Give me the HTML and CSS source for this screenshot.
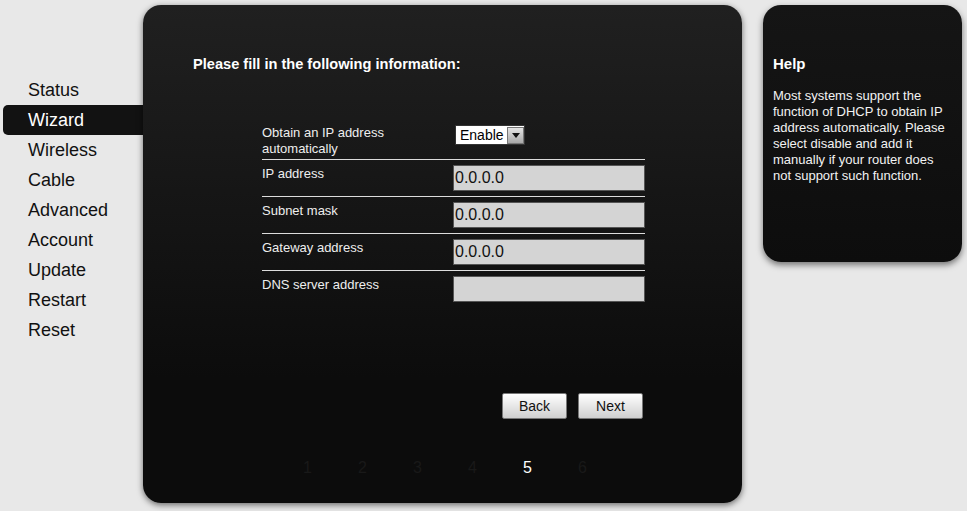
FILE: index.html
```html
<html>

<head>
    <title>Wizard</title>
    <link rel="stylesheet" href="styles.css">
</head>

<body>
    <div id="page">
        <nav id="menu">
            <div class="item">Status</div>
            <div class="item active">Wizard</div>
            <div class="item">Wireless</div>
            <div class="item">Cable</div>
            <div class="item">Advanced</div>
            <div class="item">Account</div>
            <div class="item">Update</div>
            <div class="item">Restart</div>
            <div class="item">Reset</div>
        </nav>

        <main id="panel">
            <h1 class="title">Please fill in the following information:</h1>

            <div id="form">
                <div class="row first">
                    <div class="label">Obtain an IP address automatically</div>
                    <div class="select">
                        <span class="select-value">Enable</span>
                        <span class="select-arrow">
                            <svg width="8" height="5" viewBox="0 0 8 5"><path d="M0 0h8L4 5z" fill="#111"/></svg>
                        </span>
                    </div>
                </div>
                <div class="row">
                    <div class="label">IP address</div>
                    <input class="field" type="text" value="0.0.0.0" readonly>
                </div>
                <div class="row">
                    <div class="label">Subnet mask</div>
                    <input class="field" type="text" value="0.0.0.0" readonly>
                </div>
                <div class="row">
                    <div class="label">Gateway address</div>
                    <input class="field" type="text" value="0.0.0.0" readonly>
                </div>
                <div class="row last">
                    <div class="label">DNS server address</div>
                    <input class="field" type="text" value="" readonly>
                </div>

                <div class="buttons">
                    <button class="btn">Back</button>
                    <button class="btn">Next</button>
                </div>
            </div>

            <div id="steps">
                <span class="step">1</span>
                <span class="step">2</span>
                <span class="step">3</span>
                <span class="step">4</span>
                <span class="step current">5</span>
                <span class="step">6</span>
            </div>
        </main>

        <aside id="help">
            <h2 class="help-title">Help</h2>
            <p class="help-text">Most systems support the function of DHCP to obtain IP address automatically. Please select disable and add it manually if your router does not support such function.</p>
        </aside>
    </div>
</body>

</html>
```

FILE: styles.css
```css
* {
    margin: 0;
    padding: 0;
    box-sizing: border-box;
}

:root {
    --page-color: #e8e8e8;
    --panel-top: #202020;
    --panel-bottom: #0c0c0c;
    --field-color: #d4d4d4;
}

body {
    font-family: "Liberation Sans", Arial, sans-serif;
    background-color: var(--page-color);
    color: #111;
}

#page {
    display: flex;
    align-items: flex-start;
    padding-top: 5px;
    padding-left: 3px;
}

/* left menu */
#menu {
    width: 140px;
    padding-top: 70px;
    flex-shrink: 0;
}

.item {
    height: 30px;
    line-height: 30px;
    padding-left: 25px;
    font-size: 18px;
    color: #111;
}

.item.active {
    background-color: #121212;
    color: white;
    border-radius: 5px 0 0 5px;
}

/* main panel */
#panel {
    width: 599px;
    height: 498px;
    flex-shrink: 0;
    display: flex;
    flex-direction: column;
    border-radius: 18px;
    background: linear-gradient(to bottom, var(--panel-top), var(--panel-bottom) 75%);
    box-shadow: 0 2px 6px rgba(0, 0, 0, 0.55);
    padding: 51px 0 0 50px;
    color: #eee;
}

.title {
    font-size: 14.6px;
    line-height: 16px;
    font-weight: bold;
    color: white;
}

#form {
    width: 383px;
    margin-top: 49px;
    margin-left: 69px;
}

.row {
    display: flex;
    align-items: flex-start;
    padding: 5px 0;
    border-bottom: 1px solid #dcdcdc;
}

.row.first {
    padding: 3px 0 2px;
}

.row.last {
    border-bottom: none;
}

.label {
    width: 191px;
    font-size: 13px;
    line-height: 16px;
    color: #eee;
    padding-top: 1px;
}

.first .label {
    width: 160px;
    margin-right: 33px;
}

.select {
    display: flex;
    align-items: center;
    width: 70px;
    height: 20px;
    margin-top: 1px;
    background: white;
    border: 1px solid #333;
    color: #000;
}

.select-value {
    flex: 1;
    font-size: 14px;
    padding-left: 4px;
}

.select-arrow {
    display: flex;
    align-items: center;
    justify-content: center;
    width: 17px;
    height: 17px;
    margin-right: 0;
    background: linear-gradient(to bottom, #e4e4e4, #a8a8a8);
    border: 1px solid #777;
}

.field {
    width: 192px;
    height: 26px;
    border: 1px solid #555;
    background-color: var(--field-color);
    font-family: "Liberation Sans", Arial, sans-serif;
    font-size: 16px;
    color: #111;
    padding: 0 1px;
    outline: none;
}

.buttons {
    display: flex;
    justify-content: flex-end;
    gap: 11px;
    margin-top: 86px;
    padding-right: 2px;
}

.btn {
    width: 65px;
    height: 26px;
    font-family: "Liberation Sans", Arial, sans-serif;
    font-size: 14px;
    color: #111;
    background: linear-gradient(to bottom, #ffffff, #cfcfcf);
    border: 1px solid #777;
    border-radius: 2px;
}

/* wizard steps */
#steps {
    display: flex;
    margin-top: 39px;
    margin-left: 87px;
}

.step {
    width: 55px;
    text-align: center;
    font-size: 16px;
    line-height: 20px;
    color: #191919;
}

.step.current {
    color: white;
}

/* help box */
#help {
    width: 199px;
    height: 257px;
    flex-shrink: 0;
    margin-left: 21px;
    border-radius: 18px;
    background: linear-gradient(to bottom, #151515, #0d0d0d);
    box-shadow: 0 3px 6px rgba(0, 0, 0, 0.5);
    padding: 51px 10px 0 10px;
    color: white;
}

.help-title {
    font-size: 15px;
    line-height: 16px;
    font-weight: bold;
}

.help-text {
    margin-top: 16px;
    width: 178px;
    font-size: 13px;
    line-height: 16px;
    color: #f2f2f2;
}
```
